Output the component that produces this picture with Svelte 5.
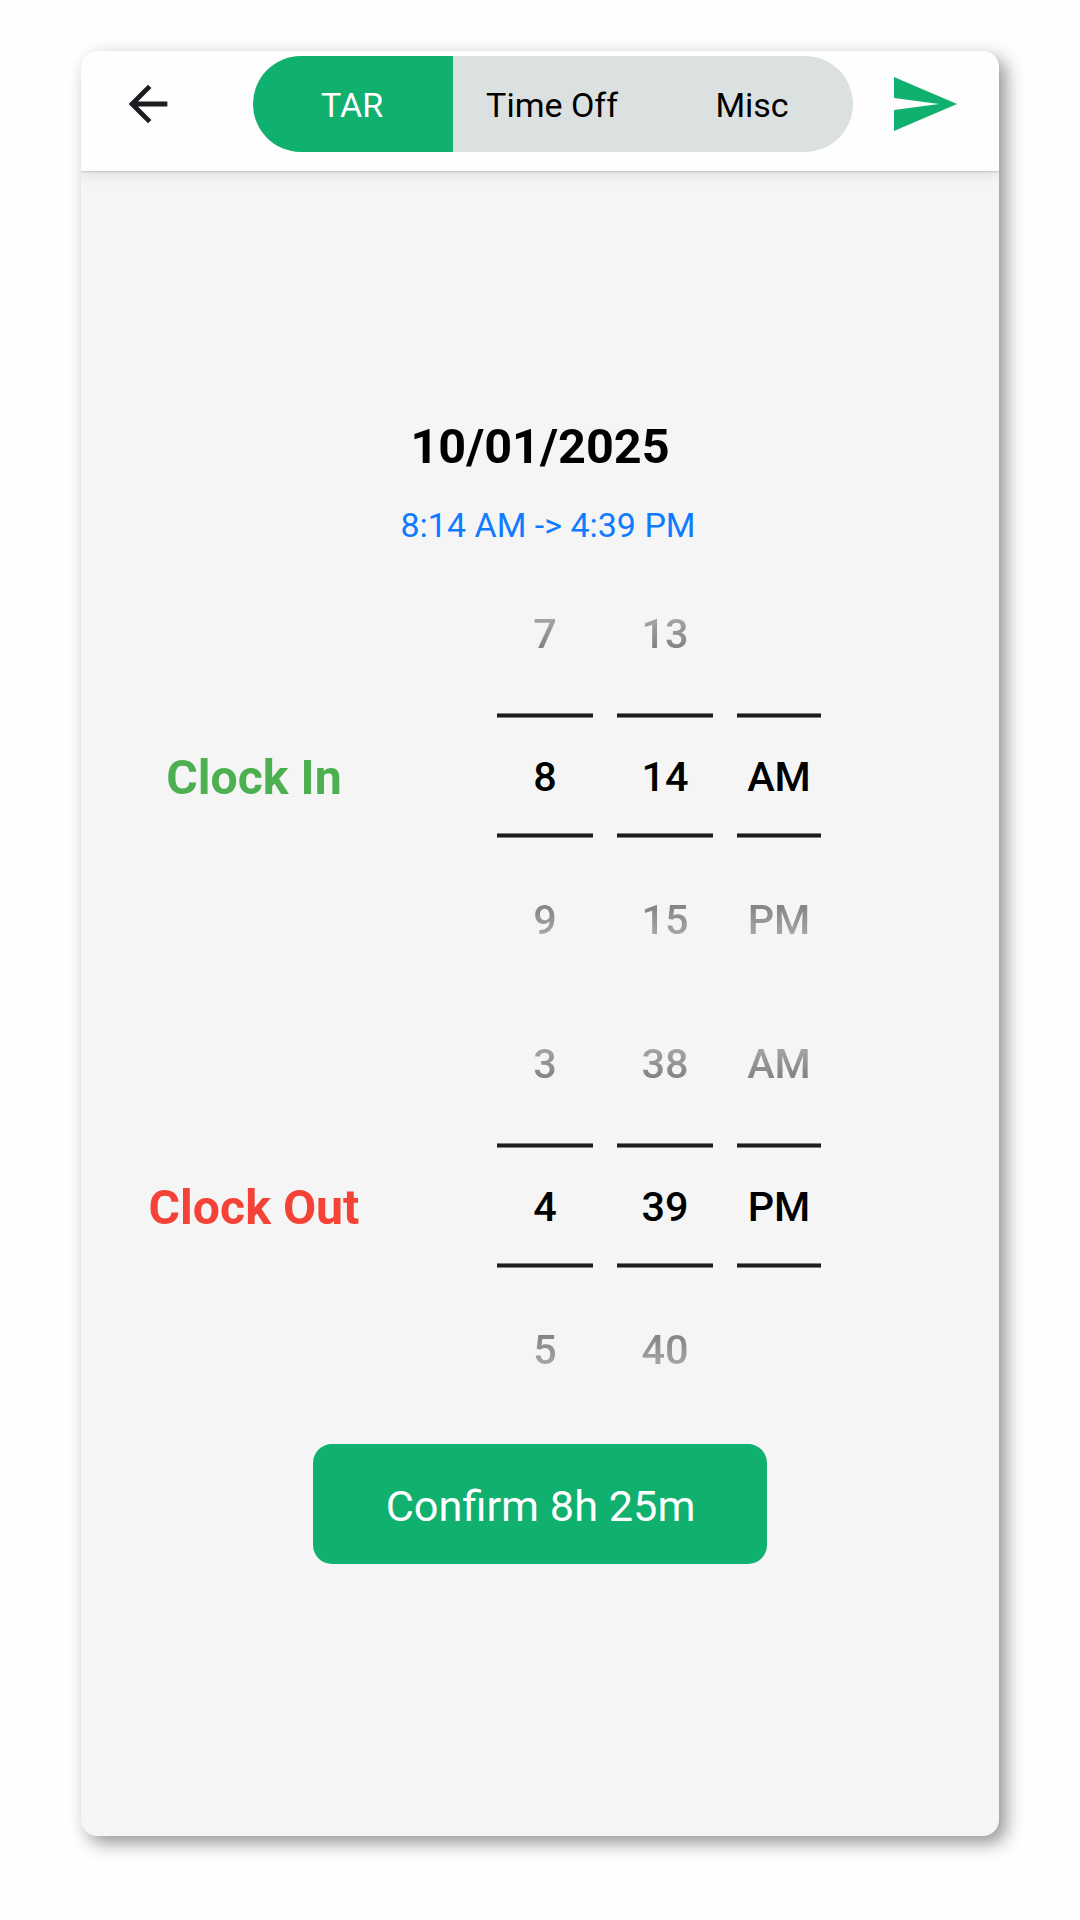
<script>
	const tabs = ['TAR', 'Time Off', 'Misc'];
	let activeTab = $state('TAR');

	const date = '10/01/2025';

	// each wheel is [previous, selected, next]
	const clocks = [
		{
			label: 'Clock In',
			kind: 'in',
			wheels: [['7', '8', '9'], ['13', '14', '15'], ['', 'AM', 'PM']]
		},
		{
			label: 'Clock Out',
			kind: 'out',
			wheels: [['3', '4', '5'], ['38', '39', '40'], ['AM', 'PM', '']]
		}
	];

	function format(clock) {
		const [hour, minute, period] = clock.wheels.map((wheel) => wheel[1]);
		return `${hour}:${minute} ${period}`;
	}
</script>

<div class="screen">
	<header>
		<button class="icon-button back" aria-label="Back">
			<svg viewBox="0 0 24 24" width="58" height="58">
				<path d="M20 11H7.83l5.59-5.59L12 4l-8 8 8 8 1.41-1.41L7.83 13H20v-2z" fill="#1c1b1f" />
			</svg>
		</button>

		<div class="tabs">
			{#each tabs as tab}
				<button class="tab" class:active={tab === activeTab} onclick={() => (activeTab = tab)}>{tab}</button>
			{/each}
		</div>

		<button class="icon-button send" aria-label="Send">
			<svg viewBox="0 0 24 24" width="72" height="72">
				<path d="M2 21l21-9L2 3v7l15 2-15 2z" fill="#10b06f" />
			</svg>
		</button>
	</header>

	<main>
		<h1>{date}</h1>
		<p class="range">{format(clocks[0])} -> {format(clocks[1])}</p>

		{#each clocks as clock}
			<section class="clock">
				<h2 class={clock.kind}>{clock.label}</h2>
				<div class="wheels">
					{#each clock.wheels as wheel}
						<div class="wheel">
							<span class="item before">{wheel[0]}</span>
							<span class="item selected">{wheel[1]}</span>
							<span class="item after">{wheel[2]}</span>
						</div>
					{/each}
				</div>
			</section>
		{/each}

		<button class="confirm">Confirm 8h 25m</button>
	</main>
</div>

<style>
	:global(body) {
		background: #fefefe;
	}

	:global(#app) {
		display: flow-root;
	}

	button {
		padding: 0;
		border: none;
		background: none;
		font-family: inherit;
		cursor: pointer;
	}

	.screen {
		box-sizing: border-box;
		width: 918px;
		height: 1785px;
		margin: 51px 81px 84px;
		border-radius: 16px;
		overflow: hidden;
		background: #f5f5f6;
		box-shadow: 7px 7px 18px rgba(0, 0, 0, 0.42);
		font-family: Roboto, sans-serif;
	}

	header {
		position: relative;
		display: flex;
		box-sizing: border-box;
		height: 120px;
		padding: 4.7px 38.7px 0 38.4px;
		background: #fefefe;
		box-shadow: 0 1px 2px rgba(0, 0, 0, 0.16), 0 3px 12px rgba(0, 0, 0, 0.1);
	}

	.icon-button {
		display: flex;
		align-items: center;
		height: 96px;
	}

	.back {
		width: 133.2px;
	}

	.send {
		margin-left: 35.8px;
	}

	.tabs {
		display: flex;
		width: 600px;
		height: 96px;
		border-radius: 48px;
		overflow: hidden;
		background: #dbe0e1;
	}

	.tab {
		width: 200px;
		padding: 2px 1px 0 0;
		font-size: 34px;
		color: #000;
	}

	.tab.active {
		background: #10b06f;
		color: #fff;
	}

	main {
		display: flex;
		flex-direction: column;
		align-items: center;
		padding-top: 246px;
	}

	h1,
	h2,
	p {
		margin: 0;
	}

	h1 {
		font-size: 48.6px;
		font-weight: 700;
		line-height: 60px;
		color: #000;
	}

	.range {
		margin: 28px 0 16px 16px;
		font-size: 34px;
		line-height: 40px;
		color: #0f7bff;
	}

	.clock {
		display: flex;
		align-items: center;
		width: 100%;
		height: 430px;
	}

	h2 {
		width: 346px;
		margin-right: 70px;
		padding-top: 2px;
		text-align: center;
		font-size: 48.2px;
		font-weight: 700;
	}

	.in {
		color: #4caf50;
	}

	.out {
		color: #f44336;
	}

	.wheels {
		display: flex;
		gap: 24px;
	}

	.wheel {
		display: flex;
		flex-direction: column;
		width: 96px;
		height: 430px;
	}

	.wheel:last-child {
		width: 84px;
	}

	.item {
		display: flex;
		align-items: center;
		justify-content: center;
		box-sizing: border-box;
		height: 144px;
		font-size: 41.4px;
		font-weight: 500;
	}

	.selected {
		--rule: linear-gradient(#808080 1px, #1c1b1f 1px 4px, #808080 4px);
		height: 125px;
		margin: 8px 0 9px;
		padding-top: 3px;
		background: var(--rule) top / 100% 5px no-repeat, var(--rule) bottom / 100% 5px no-repeat;
		color: #000;
	}

	/* the neighbours fade out away from the selected value */
	.before,
	.after {
		padding-top: 1px;
		background-clip: text;
		color: transparent;
	}

	.before {
		background-image: linear-gradient(to bottom, #a8a8a8 38%, #808080 62%);
	}

	.after {
		padding-top: 2px;
		background-image: linear-gradient(to top, #a8a8a8 38%, #808080 62%);
	}

	.confirm {
		width: 454px;
		height: 120px;
		margin-top: 23px;
		padding: 4px 0 0 1px;
		border-radius: 19px;
		background: #10b06f;
		font-size: 43.3px;
		color: #fff;
	}
</style>
